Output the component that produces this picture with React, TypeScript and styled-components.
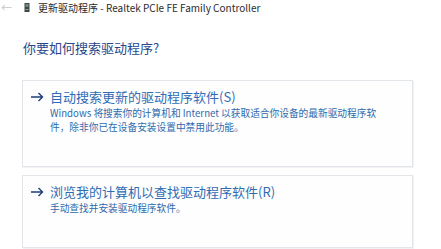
import styled, { createGlobalStyle } from 'styled-components';

const GlobalStyle = createGlobalStyle`
  html, body {
    margin: 0;
    padding: 0;
    background: #ffffff;
  }
  body {
    font-family: "Noto Sans CJK SC", "Noto Sans", sans-serif;
  }
`;

interface Option {
  title: string;
  description: string;
}

const options: Option[] = [
  {
    title: '自动搜索更新的驱动程序软件(S)',
    description:
      'Windows 将搜索你的计算机和 Internet 以获取适合你设备的最新驱动程序软件，除非你已在设备安装设置中禁用此功能。',
  },
  {
    title: '浏览我的计算机以查找驱动程序软件(R)',
    description: '手动查找并安装驱动程序软件。',
  },
];

const DeviceIcon = () => (
  <svg width="6" height="10" viewBox="0 0 6 10">
    <rect x="0.5" y="0" width="5" height="9" fill="#3d4a44" />
    <rect x="1.5" y="1" width="3" height="3" fill="#6f8a7c" />
    <rect x="1.5" y="6" width="3" height="1" fill="#8fa39a" />
  </svg>
);

const LinkArrow = () => (
  <svg width="14" height="10" viewBox="0 0 14 10">
    <path d="M1 5H12.5M8.5 1L12.5 5L8.5 9" fill="none" stroke="#1c3f78" strokeWidth="1.4" />
  </svg>
);

const App = () => (
  <>
    <GlobalStyle />
    <Page>
      <TitleBar>
        <BackArrow>←</BackArrow>
        <DeviceIcon />
        <TitleText>更新驱动程序 - Realtek PCIe FE Family Controller</TitleText>
      </TitleBar>

      <Content>
        <Heading>你要如何搜索驱动程序?</Heading>

        <OptionList>
          {options.map((option) => (
            <OptionCard key={option.title}>
              <ArrowSlot>
                <LinkArrow />
              </ArrowSlot>
              <OptionBody>
                <OptionTitle>{option.title}</OptionTitle>
                <OptionDescription>{option.description}</OptionDescription>
              </OptionBody>
            </OptionCard>
          ))}
        </OptionList>
      </Content>
    </Page>
  </>
);

const Page = styled.div`
  width: 441px;
  height: 249px;
  overflow: hidden;
  background: #ffffff;
`;

const TitleBar = styled.div`
  display: flex;
  align-items: center;
  height: 15px;
  padding-left: 1px;
`;

const BackArrow = styled.span`
  width: 23px;
  font-size: 11px;
  line-height: 15px;
  color: #c4c8cc;
`;

const TitleText = styled.span`
  margin-left: 8px;
  font-size: 10px;
  line-height: 15px;
  color: #2b2b2b;
  white-space: nowrap;
`;

const Content = styled.div`
  padding: 25px 28px 0 22px;
`;

const Heading = styled.h1`
  margin: 0 0 0 1px;
  font-size: 13px;
  line-height: 16px;
  font-weight: normal;
  color: #27478a;
`;

const OptionList = styled.div`
  display: flex;
  flex-direction: column;
  gap: 8px;
  margin-top: 24px;
`;

const OptionCard = styled.div`
  display: flex;
  align-items: flex-start;
  gap: 6px;
  padding: 7px 18px 32px 7px;
  border: 1px solid #e2e5e9;
  box-shadow: 1px 1px 0 #f0f2f4;
  background: #fefefe;
`;

const ArrowSlot = styled.div`
  display: flex;
  align-items: center;
  height: 18px;
  width: 14px;
  flex-shrink: 0;
`;

const OptionBody = styled.div`
  display: flex;
  flex-direction: column;
  flex: 1;
`;

const OptionTitle = styled.div`
  font-size: 13px;
  line-height: 18px;
  color: #2f6cb3;
  white-space: nowrap;
`;

const OptionDescription = styled.div`
  font-size: 9.7px;
  line-height: 14px;
  color: #2e6aac;
`;

export default App;
